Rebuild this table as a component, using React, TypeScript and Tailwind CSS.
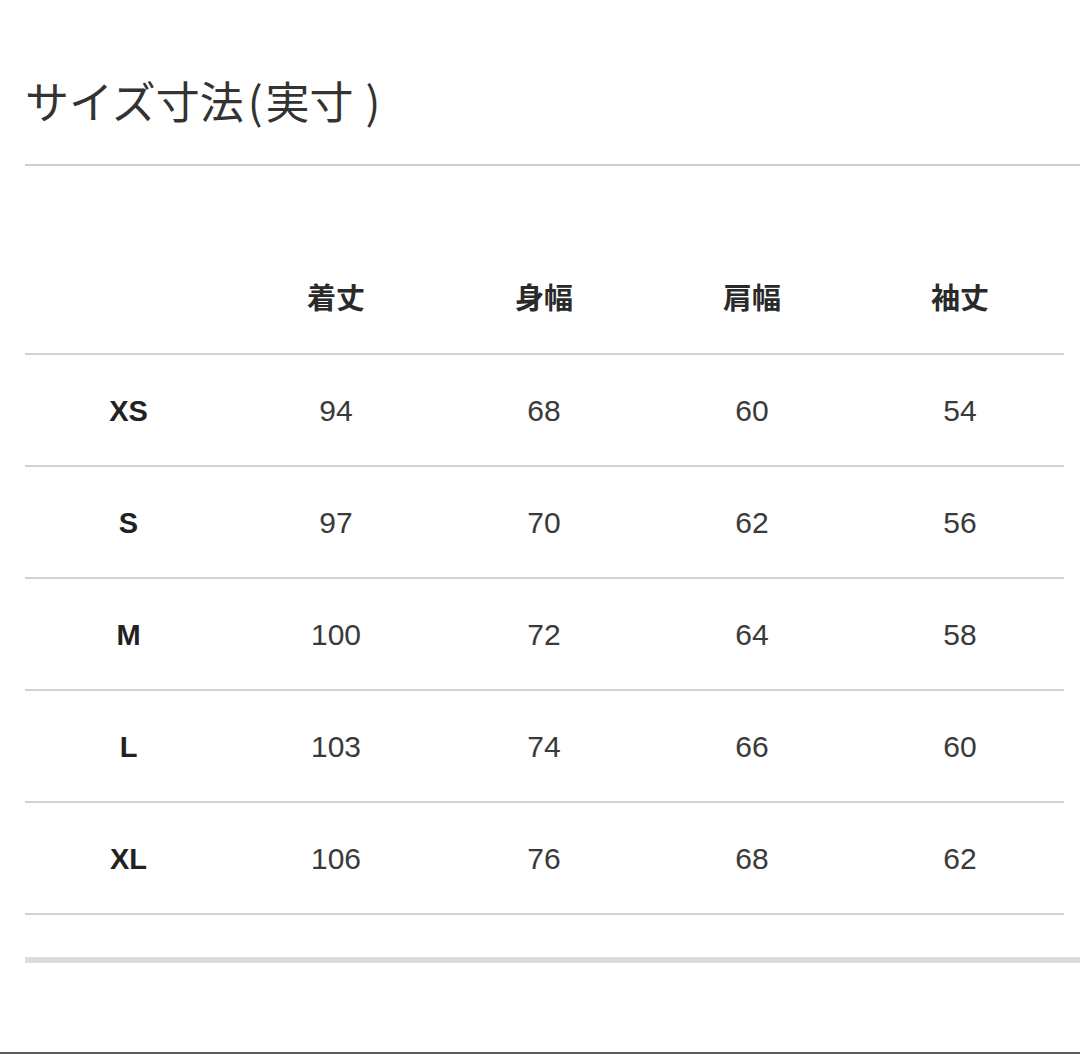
const headers = ['着丈', '身幅', '肩幅', '袖丈'];

const rows = [
  { size: 'XS', values: [94, 68, 60, 54] },
  { size: 'S', values: [97, 70, 62, 56] },
  { size: 'M', values: [100, 72, 64, 58] },
  { size: 'L', values: [103, 74, 66, 60] },
  { size: 'XL', values: [106, 76, 68, 62] },
];

const jp = "font-['Noto_Sans_CJK_JP',sans-serif]";
const latin = "font-['Liberation_Sans',Arial,sans-serif]";

export default function App() {
  return (
    <div className="w-[1080px] h-[1054px] bg-white overflow-hidden border-b-2 border-[#5a5a5a] box-border">
      <div className="pl-[25px] pt-[78px]">
        {/* Title */}
        <h2 className={`${jp} text-[44px] leading-none text-[#333] font-normal flex items-center`}>
          <span>サイズ寸法</span>
          <span className="ml-[4px] mr-[3px]">(</span>
          <span>実寸</span>
          <span className="ml-[12px]">)</span>
        </h2>
        <div className="mt-[42px] h-[2px] bg-[#cfcfcf]" />

        {/* Size table */}
        <div className="mt-[77px] w-[1039px]">
          <div className="grid grid-cols-[207px_208px_208px_208px_208px] h-[112px] items-center border-b-2 border-[#d2d2d2]">
            <div />
            {headers.map((h) => (
              <div key={h} className={`${jp} text-center text-[29px] font-bold text-[#2a2a2a] leading-none pb-[4px]`}>
                {h}
              </div>
            ))}
          </div>
          {rows.map((r) => (
            <div
              key={r.size}
              className="grid grid-cols-[207px_208px_208px_208px_208px] h-[112px] items-center border-b-2 border-[#d2d2d2]"
            >
              <div className={`${latin} text-center text-[29px] font-bold text-[#222] leading-none pt-[2px]`}>{r.size}</div>
              {r.values.map((v, i) => (
                <div key={i} className={`${latin} text-center text-[30px] text-[#3a3a3a] leading-none pt-[2px]`}>
                  {v}
                </div>
              ))}
            </div>
          ))}
        </div>

        <div className="mt-[42px] h-[6px] bg-[#dcdcdc]" />
      </div>
    </div>
  );
}
